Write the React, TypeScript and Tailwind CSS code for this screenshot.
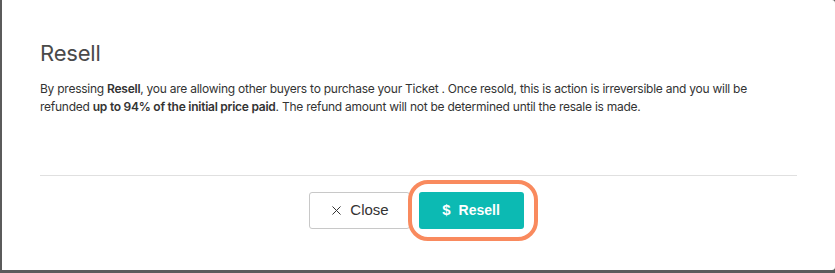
import { X } from 'lucide-react'

export default function App() {
  return (
    <div className="w-[835px] h-[273px] bg-[#5b5b5b] pl-[2px] pb-[3px] overflow-hidden" style={{ fontFamily: 'Inter, "Noto Sans", sans-serif' }}>
      <div className="h-full bg-white rounded-br-[3px] rounded-tr-[3px] flex flex-col">
        <div className="px-[38px] pt-[40px]">
          <h2 className="text-[22px] leading-[26px] text-[#4a4a4a] font-normal tracking-[-0.2px]">Resell</h2>
          <p className="mt-[14px] text-[12px] leading-[18px] text-[#333] w-[730px] tracking-[-0.25px]">
            By pressing <b className="font-semibold">Resell</b>, you are allowing other buyers to purchase your Ticket . Once resold, this is action is irreversible and you will be refunded <b className="font-semibold">up to 94% of the initial price paid</b>. The refund amount will not be determined until the resale is made.
          </p>
        </div>
        <div className="mx-[38px] mt-[59px] border-t border-[#e0e0e0]" />
        <div className="flex justify-center gap-[9px] mt-[16px] pr-[5px]">
          <button className="w-[101px] h-[37px] border border-[#c8c8c8] rounded-[3px] flex items-center justify-center gap-[6px] text-[15px] text-[#333] font-medium" style={{ fontFamily: '"Liberation Sans", Arial, sans-serif' }}>
            <X size={15} strokeWidth={1.6} />
            Close
          </button>
          <div className="relative">
            <button className="w-[105px] h-[37px] bg-[#0cbab3] rounded-[3px] flex items-center justify-center gap-[8px] text-[14px] text-white font-bold" style={{ fontFamily: '"Liberation Sans", Arial, sans-serif' }}>
              <span className="text-[15px]">$</span>
              Resell
            </button>
            <div className="absolute -left-[11px] -top-[12px] w-[130px] h-[61px] border-[4px] border-[#f98a5e] rounded-[20px] pointer-events-none" />
          </div>
        </div>
      </div>
    </div>
  )
}
